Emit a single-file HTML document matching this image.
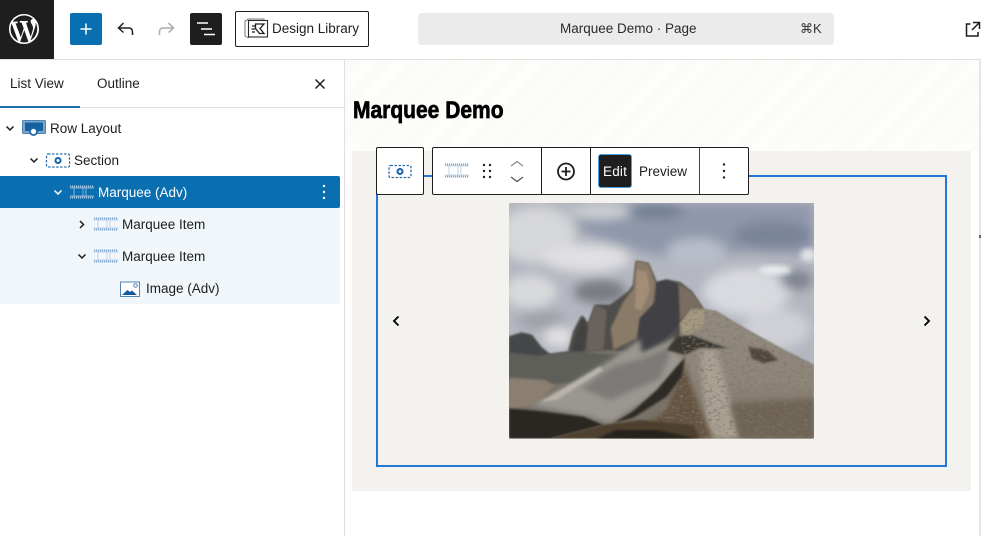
<!DOCTYPE html>
<html lang="en"><head><meta charset="utf-8"><title>Marquee Demo</title>
<style>
*{box-sizing:border-box}
html,body{margin:0;padding:0;width:981px;height:536px;overflow:hidden;background:#fff;font-family:"Liberation Sans",sans-serif;color:#1e1e1e}
.a{position:absolute}
.t{position:absolute;font-size:13.5px;line-height:18px;white-space:nowrap;letter-spacing:0}
svg{position:absolute;overflow:visible;display:block}
</style></head><body>
<!-- top bar -->
<div class="a" style="left:0;top:0;width:54px;height:59px;background:#1e1e1e"></div>
<svg style="left:9px;top:14px" width="30" height="30" viewBox="0 0 20 20"><path fill="#fff" fill-rule="evenodd" d="M20 10c0-5.510-4.490-10-10-10C4.480 0 0 4.490 0 10c0 5.520 4.480 10 10 10 5.510 0 10-4.480 10-10zM7.780 15.370L4.370 6.220c.550-.020 1.170-.080 1.170-.080.500-.060.440-1.130-.060-1.110 0 0-1.450.110-2.370.110-.180 0-.370 0-.580-.010C4.120 2.690 6.890 1.040 10 1.040c2.320 0 4.430.870 6.010 2.300h-.110c-.870 0-1.480.760-1.480 1.570 0 .730.420 1.350.870 2.080.340.590.720 1.350.720 2.450 0 .760-.290 1.640-.670 2.870l-.880 2.940-3.180-9.460c.530-.030 1-.080 1-.080.470-.060.420-1.170-.060-1.110 0 0-1.430.110-2.340.110-.860 0-2.330-.110-2.330-.110-.480-.020-.530 1.050-.050 1.110 0 0 .450.050.930.080l1.380 3.780-1.940 5.810zM10 18.960c-.880 0-1.730-.130-2.530-.37l2.690-7.810 2.750 7.530c.020.040.040.090.060.120-.930.330-1.930.530-2.970.530zM1.040 10c0-1.300.280-2.530.780-3.650l4.280 11.720C3.100 16.620 1.040 13.550 1.040 10zM14.350 17.700l2.750-7.950c.510-1.280.680-2.300.680-3.210 0-.330-.020-.640-.060-.920.700 1.280 1.100 2.750 1.100 4.320 0 3.330-1.800 6.230-4.470 7.760z"/></svg>
<div class="a" style="left:70px;top:13px;width:32px;height:32px;background:#0a6fb0;border-radius:2px"></div>
<svg style="left:70px;top:13px" width="32" height="32"><path d="M16 10.500v11M10.500 16h11" stroke="#fff" stroke-width="1.500"/></svg>
<svg style="left:116px;top:20px" width="20" height="18" fill="none" stroke="#1e1e1e" stroke-width="1.500"><path d="M7.500 3 2.500 8l5 4.500M3 8h10c2.500 0 3.500 2 3.500 4v3"/></svg>
<svg style="left:156px;top:20px" width="20" height="18" fill="none" stroke="#aaa" stroke-width="1.500"><path d="M12.500 3l5 5-5 4.500M17 8H7c-2.500 0-3.500 2-3.500 4v3"/></svg>
<div class="a" style="left:190px;top:13px;width:32px;height:32px;background:#1e1e1e;border-radius:2px"></div>
<svg style="left:190px;top:13px" width="32" height="32" fill="none" stroke="#fff" stroke-width="1.500"><path d="M7 10h11M11 16h11M14 21.500h11"/></svg>
<div class="a" style="left:235px;top:11px;width:134px;height:36px;border:1.500px solid #1e1e1e;border-radius:2px"></div>
<svg style="left:244px;top:17px" width="25" height="24" fill="none" stroke="#777" stroke-width="1"><path d="M1 4v15l3.500 2M1 4l3-1.500M4 2.500V2h16v1.500"/><rect x="4.500" y="3.500" width="19" height="16.500" stroke="#2a2a2a" stroke-width="1.100" fill="#fff"/><path d="M11.500 7H20l-4 4.500 4 5h-4.500l-4-5zM8 9h3.500M7.500 12H11M8 15h3" stroke="#1e1e1e" stroke-width="1.300" fill="none"/></svg>
<div class="t" style="left:272px;top:20px;font-size:13.500px">Design Library</div>
<div class="a" style="left:418px;top:13px;width:416px;height:32px;background:#ebebeb;border-radius:4px"></div>
<div class="t" style="left:560px;top:20px;color:#2b2b2b">Marquee Demo · Page</div>
<div class="t" style="left:800px;top:20px;font-size:13px;color:#333;font-family:'Liberation Sans','DejaVu Sans',sans-serif">⌘K</div>
<svg style="left:965px;top:21px" width="16" height="17" fill="none" stroke="#1e1e1e" stroke-width="1.500"><path d="M5.500 3H1.500v12H13v-4M8 1.500h6.500V8M14.500 1.500 7 9"/></svg>
<div class="a" style="left:0;top:59px;width:981px;height:1px;background:#e0e0e0"></div>
<!-- sidebar -->
<div class="a" style="left:344px;top:60px;width:1px;height:476px;background:#e0e0e0"></div>
<div class="t" style="left:10px;top:75px">List View</div>
<div class="t" style="left:97px;top:75px">Outline</div>
<svg style="left:313px;top:77px" width="14" height="14" fill="none" stroke="#1e1e1e" stroke-width="1.500"><path d="M2.500 2.500l9 9M11.500 2.500l-9 9"/></svg>
<div class="a" style="left:0;top:107px;width:344px;height:1px;background:#e0e0e0"></div>
<div class="a" style="left:0;top:106px;width:80px;height:2px;background:#1a6fa8"></div>
<!-- list -->
<div class="a" style="left:0;top:208px;width:340px;height:96px;background:#f0f6fa"></div>
<div class="a" style="left:0;top:176px;width:340px;height:32px;background:#0a6fb0;border-radius:0 2px 2px 0"></div>
<svg style="left:0;top:0" width="345" height="310" fill="none">
<path d="M6.500 126.500l3.500 3.500 3.500-3.500M30.500 158.500l3.500 3.500 3.500-3.500" stroke="#1e1e1e" stroke-width="1.500"/>
<path d="M54.500 190.500l3.500 3.500 3.500-3.500" stroke="#fff" stroke-width="1.500"/>
<path d="M80 221l3.500 3.500L80 228M78.500 254.500l3.500 3.500 3.500-3.500" stroke="#1e1e1e" stroke-width="1.500"/>
<!-- row layout -->
<rect x="22.500" y="120.500" width="23" height="13" rx="1" fill="#7fa6c9" stroke="#4c82b4"/>
<rect x="25" y="122.500" width="18" height="8.500" fill="#15609f"/>
<circle cx="33.500" cy="131.500" r="3.500" fill="#fff" stroke="#1f66a8" stroke-width="1.800"/>
<!-- section -->
<rect x="46.500" y="154" width="23" height="13" rx="1.500" stroke="#2f6ea8" stroke-width="1.300" stroke-dasharray="2.500 1.500"/>
<circle cx="58" cy="160.500" r="2.500" stroke="#1463a8" stroke-width="2"/>
<!-- marquee adv -->
<g stroke="#a9cbe6"><path d="M70 186.500h24M70 197.500h24" stroke-width="2" stroke-dasharray="1.200 .8"/><path d="M70 188h24M70 196h24M74 188v8M83 188v8M86 188v8" stroke-width=".7"/></g>
<g stroke="#7ba4c9"><path d="M94 218.500h24M94 229.500h24M94 250.500h24M94 261.500h24" stroke-width="2" stroke-dasharray="1.200 .8"/></g>
<g stroke="#b4cde2" stroke-width=".8"><path d="M94 220h24M94 228h24M98 220v8M107 220v8M110 220v8M94 252h24M94 260h24M98 252v8M107 252v8M110 252v8"/></g>
<!-- image icon -->
<rect x="120.500" y="282" width="19" height="14.500" stroke="#4f87b8" fill="#fff"/>
<path d="M122 295l5.500-5 2.500 2 2-1.500 5 4.500z" fill="#12599b"/>
<circle cx="135.500" cy="285.500" r="1.800" stroke="#4f87b8" fill="#fff"/>
</svg>
<div class="t" style="left:50px;top:119.500px">Row Layout</div>
<div class="t" style="left:74px;top:151.500px">Section</div>
<div class="t" style="left:98px;top:183.500px;color:#fff">Marquee (Adv)</div>
<div class="t" style="left:122px;top:215.500px">Marquee Item</div>
<div class="t" style="left:122px;top:247.500px">Marquee Item</div>
<div class="t" style="left:146px;top:279.500px">Image (Adv)</div>
<svg style="left:322px;top:184px" width="4" height="16" fill="#fff"><circle cx="2" cy="2" r="1.200"/><circle cx="2" cy="8" r="1.200"/><circle cx="2" cy="14" r="1.200"/></svg>
<!-- canvas -->
<div class="a" style="left:345px;top:60px;width:634px;height:476px;background:#fff"></div>
<div class="a" style="left:345px;top:60px;width:634px;height:91px;background:repeating-linear-gradient(135deg,#fbfbf8 0 12px,#fdfdfc 12px 24px)"></div>
<div class="a" style="left:979px;top:60px;width:2px;height:476px;background:#e4e4ea"></div>
<div class="a" style="left:979px;top:235px;width:2px;height:3px;background:#666"></div>
<div class="a" style="left:352.500px;top:96.500px;font:700 24px/28px 'Liberation Sans',sans-serif;color:#000;transform:scaleX(.875);transform-origin:0 0;white-space:nowrap;-webkit-text-stroke:.7px #000">Marquee Demo</div>
<div class="a" style="left:352px;top:151px;width:619px;height:340px;background:#f3f2ee"></div>
<div class="a" style="left:376px;top:175px;width:571px;height:292px;border:2px solid #2478d4"></div>
<!-- photo -->
<svg style="left:500px;top:195px" width="320" height="250" viewBox="0 0 960 750">
<defs>
<clipPath id="c"><rect x="27" y="24" width="915" height="707"/></clipPath>
<filter id="b" x="-20%" y="-20%" width="140%" height="140%"><feGaussianBlur stdDeviation="16"/></filter>
<filter id="b2" x="-20%" y="-20%" width="140%" height="140%"><feGaussianBlur stdDeviation="8"/></filter>
<filter id="b3" x="-10%" y="-10%" width="120%" height="120%"><feGaussianBlur stdDeviation="3"/></filter>
<filter id="n" x="0" y="0" width="100%" height="100%"><feTurbulence type="fractalNoise" baseFrequency=".08 .14" numOctaves="2" seed="4"/><feColorMatrix values="0 0 0 0 .2  0 0 0 0 .18  0 0 0 0 .15  0 0 0 2.400 -1.180"/><feComposite in2="SourceAlpha" operator="in"/></filter>
<linearGradient id="g" x1="0" y1="0" x2="0" y2="1"><stop offset="0" stop-color="#948b7f"/><stop offset=".55" stop-color="#8e8679"/><stop offset="1" stop-color="#7a6f60"/></linearGradient>
</defs>
<g clip-path="url(#c)">
<rect x="27" y="24" width="915" height="707" fill="#b4b7c0"/>
<g filter="url(#b)">
<path d="M220 24H942V180L720 170 600 210 420 170 240 110z" fill="#8f98ab"/>
<ellipse cx="470" cy="48" rx="80" ry="22" fill="#6f7c8e"/>
<ellipse cx="820" cy="120" rx="120" ry="40" fill="#7a8498"/>
<ellipse cx="110" cy="120" rx="115" ry="85" fill="#d6d7da"/>
<ellipse cx="300" cy="50" rx="90" ry="22" fill="#cfd1d5"/>
<ellipse cx="260" cy="190" rx="130" ry="42" fill="#e0e0e2"/>
<ellipse cx="90" cy="290" rx="80" ry="50" fill="#d8d9db"/>
<ellipse cx="300" cy="290" rx="80" ry="36" fill="#787b82"/>
<ellipse cx="125" cy="375" rx="70" ry="28" fill="#9ea0a7"/>
<ellipse cx="740" cy="290" rx="130" ry="70" fill="#d9dadf"/>
<ellipse cx="830" cy="400" rx="100" ry="60" fill="#cfd0d6"/>
<ellipse cx="890" cy="255" rx="50" ry="30" fill="#7e8390"/>
<ellipse cx="175" cy="425" rx="44" ry="30" fill="#e2e2e3"/>
<ellipse cx="590" cy="170" rx="90" ry="40" fill="#b8bdc9"/>
</g>
<ellipse cx="825" cy="225" rx="50" ry="14" fill="#eaebec" filter="url(#b2)"/>
<ellipse cx="925" cy="180" rx="24" ry="20" fill="#e0e1e4" filter="url(#b2)"/>
<!-- base of the mountain -->
<path d="M27 425L65 413 95 420 125 458 150 478 205 470 220 410 245 362 265 385 285 330 330 330 385 290 400 270 408 198 445 205 470 262 500 255 540 262 575 290 612 345 650 350 690 375 750 410 850 465 940 510V731H27z" fill="#77726a" filter="url(#b3)"/>
<!-- back hill -->
<path d="M27 425L65 413 95 420 125 458 150 478 215 470 340 490 27 560z" fill="#45474a" filter="url(#b3)"/>
<path d="M27 472L110 482 210 470 360 480 250 560 130 570 27 552z" fill="#5f5e5a" filter="url(#b3)"/>
<!-- rock towers -->
<path d="M205 470L220 410 245 362 265 385 285 330 330 330 385 290 400 270 408 198 445 205 470 262 500 255 540 262 575 290 612 345 560 430 420 475 330 465 260 470z" fill="#4f4d4b" filter="url(#b3)"/>
<path d="M400 280L408 198 445 205 468 265 460 330 420 370 410 430 340 465 332 400 370 320z" fill="#8a7a68" filter="url(#b3)"/>
<path d="M420 370L468 320 470 262 500 255 530 265 560 300 545 380 490 440 425 475 415 430z" fill="#3f4145" filter="url(#b3)"/>
<path d="M535 265L575 290 612 345 570 345 540 380z" fill="#786d61" filter="url(#b3)"/>
<path d="M265 385L285 330 320 345 310 465 258 470z" fill="#6a645d" filter="url(#b3)"/>
<path d="M215 468L235 395 250 365 262 400 250 470z" fill="#43423f" filter="url(#b3)"/>
<path d="M410 225L440 230 450 285 425 345 405 340z" fill="#a38d76" filter="url(#b3)"/>
<!-- scree -->
<path d="M90 630L200 575 340 490 420 432 425 475 520 430 555 440 560 490 480 590 330 685 270 665z" fill="#9a9690" filter="url(#b2)"/>
<path d="M245 580L340 515 430 490 520 450 480 550 330 615z" fill="#7c7a77" filter="url(#b2)"/>
<path d="M120 622L300 515 310 525 170 615z" fill="#b8b3ac" filter="url(#b3)"/>
<!-- main slope -->
<path d="M540 385L570 345 612 342 650 350 690 375 750 410 850 465 940 510V731H400L510 610 550 500 500 450 540 430z" fill="url(#g)" filter="url(#b3)"/>
<path d="M600 465L650 465 720 731H620z" fill="#aaa193" filter="url(#b2)"/>
<path d="M745 455L800 465 835 495 790 505 755 490z" fill="#4f473d" filter="url(#b3)"/>
<path d="M500 465L530 425 575 420 640 445 685 460 600 458 555 480z" fill="#3b3833" filter="url(#b3)"/>
<path d="M540 385L575 342 615 345 610 390 565 420 545 410z" fill="#a6987f" filter="url(#b3)"/>
<path d="M690 625L942 610V731H720z" fill="#6e6354" filter="url(#b2)"/>
<!-- dark ridge and brown foot -->
<path d="M550 500L600 640 640 731H380L500 640z" fill="#65533f" filter="url(#b2)"/>
<path d="M540 385L570 345 612 342 650 350 690 375 750 410 850 465 940 510V731H400L510 610 550 500z" filter="url(#n)"/>
<path d="M555 488L545 545 500 605 400 668 340 685 400 648 470 585 530 515z" fill="#2f2b26" filter="url(#b3)"/>
<!-- foreground -->
<path d="M27 548L135 555 165 572 100 630 27 645z" fill="#8a7f70" filter="url(#b3)"/>
<path d="M27 640L120 648 250 665 310 690 150 731H27z" fill="#2a2622" filter="url(#b3)"/>
<path d="M150 731L310 690 420 675 580 690 600 731z" fill="#4d3f2f" filter="url(#b3)"/>
<path d="M290 731L350 705 470 705 590 731z" fill="#26211c" filter="url(#b3)"/>
</g>
</svg>
<svg style="left:391px;top:315px" width="10" height="12" fill="none" stroke="#000" stroke-width="1.900"><path d="M7.500 1.500 3 6l4.500 4.500"/></svg>
<svg style="left:922px;top:315px" width="10" height="12" fill="none" stroke="#000" stroke-width="1.900"><path d="M2.500 1.500 7 6l-4.500 4.500"/></svg>
<!-- block toolbar -->
<div class="a" style="left:376px;top:147px;width:48px;height:48px;background:#fff;border:1px solid #1e1e1e;border-radius:2px"></div>
<svg style="left:388px;top:164px" width="24" height="14" fill="none"><rect x="1" y="1.500" width="22" height="12" rx="1.500" stroke="#2f6ea8" stroke-width="1.300" stroke-dasharray="2.500 1.500"/><circle cx="12" cy="7.500" r="2.500" stroke="#1463a8" stroke-width="2"/></svg>
<div class="a" style="left:432px;top:147px;width:317px;height:48px;background:#fff;border:1px solid #1e1e1e;border-radius:2px"></div>
<div class="a" style="left:541px;top:148px;width:1px;height:46px;background:#1e1e1e"></div>
<div class="a" style="left:590px;top:148px;width:1px;height:46px;background:#1e1e1e"></div>
<div class="a" style="left:699px;top:148px;width:1px;height:46px;background:#444"></div>
<svg style="left:440px;top:160px" width="300" height="24" fill="none">
<path d="M5 4.500h24M5 16.500h24" stroke="#7ba4c9" stroke-width="2" stroke-dasharray="1.200 .8"/>
<path d="M5 6h24M5 15h24M9 6v9M18 6v9M21 6v9" stroke="#b4cde2" stroke-width=".8"/>
<g fill="#1e1e1e"><circle cx="44" cy="5" r="1.200"/><circle cx="50" cy="5" r="1.200"/><circle cx="44" cy="11" r="1.200"/><circle cx="50" cy="11" r="1.200"/><circle cx="44" cy="17" r="1.200"/><circle cx="50" cy="17" r="1.200"/></g>
<path d="M71 6l6-4.500L83 6" stroke="#8a8a8a" stroke-width="1.300"/>
<path d="M71 17l6 4.500L83 17" stroke="#5a5a5a" stroke-width="1.300"/>
<circle cx="126" cy="11.500" r="8" stroke="#1e1e1e" stroke-width="1.800"/>
<path d="M121.500 11.500h9M126 7v9" stroke="#1e1e1e" stroke-width="1.800"/>
<g fill="#1e1e1e"><circle cx="284" cy="4.500" r="1.200"/><circle cx="284" cy="11" r="1.200"/><circle cx="284" cy="17.500" r="1.200"/></g>
</svg>
<div class="a" style="left:598px;top:154px;width:34px;height:34px;background:#1e1e1e;border:1.500px solid #4aa3e0;border-radius:3px"></div>
<div class="t" style="left:603px;top:162.500px;color:#fff;letter-spacing:.2px">Edit</div>
<div class="t" style="left:639px;top:162.500px">Preview</div>
</body></html>
